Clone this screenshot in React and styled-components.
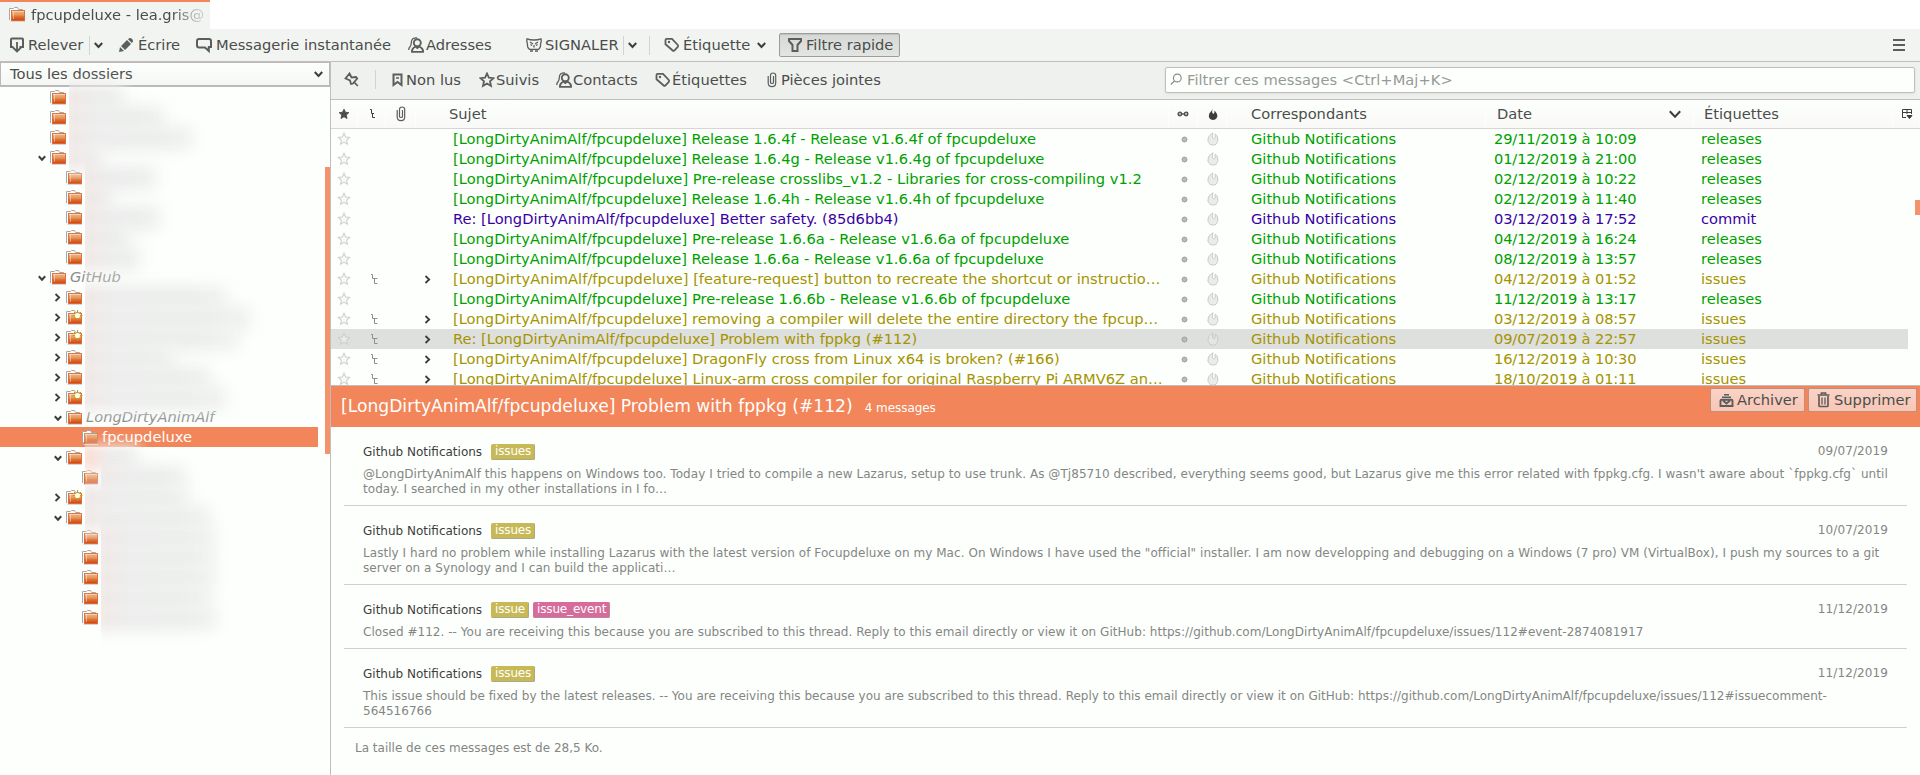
import React from "react";
import styled, { createGlobalStyle, css } from "styled-components";

const Global = createGlobalStyle`
  * { box-sizing: border-box; }
  body { margin: 0; background: #fdfffd; overflow: hidden; }
`;

const Window = styled.div`
  width: 1920px;
  height: 775px;
  display: flex;
  flex-direction: column;
  overflow: hidden;
  background: #fdfffd;
  color: #4b4d4b;
  font: 14.67px/20px "DejaVu Sans", sans-serif;
  white-space: nowrap;
  svg { flex: none; display: block; }
`;

const TabStrip = styled.div`
  height: 29px;
  flex: none;
  background: #fff;
  display: flex;
`;
const Tab = styled.div`
  width: 210px;
  height: 29px;
  border-top: 2px solid #f28559;
  background: #f2f4f2;
  display: flex;
  align-items: center;
  padding: 0 0 2px 9px;
  gap: 5px;
`;
const TabTitle = styled.span`
  width: 175px;
  mask-image: linear-gradient(to right, #000 140px, rgba(0,0,0,.25) 168px);
`;

const Toolbar = styled.div`
  height: 33px;
  flex: none;
  display: flex;
  align-items: center;
  background: #f2f4f2;
  border-bottom: 1px solid #c3bdbd;
  padding-left: 9px;
`;
const ToolItem = styled.div`
  display: flex;
  align-items: center;
  gap: ${(p) => p.$gap ?? 4}px;
  width: ${(p) => (p.$w ? p.$w + "px" : "auto")};
  padding-left: ${(p) => p.$pl ?? 0}px;
  flex: none;
`;
const Separator = styled.i`
  width: 1px;
  height: ${(p) => p.$h ?? 19}px;
  background: #d3d4d2;
  flex: none;
`;
const PressedButton = styled(ToolItem)`
  height: 24px;
  border: 1px solid #9c9e9c;
  border-radius: 2px;
  background: linear-gradient(#d6d8d6, #e3e5e3);
  box-shadow: inset 0 1px 1px #bfc1bf;
`;
const MenuButton = styled.div`
  margin-left: auto;
  margin-right: 15px;
`;

const Main = styled.div`
  flex: 1;
  min-height: 0;
  display: flex;
`;
const Sidebar = styled.aside`
  width: 331px;
  flex: none;
  border-right: 1px solid #c3bdbd;
  display: flex;
  flex-direction: column;
`;
const FolderMode = styled.div`
  height: 25px;
  flex: none;
  border: 1px solid #bdb9b9;
  border-bottom-width: 2px;
  background: linear-gradient(#fdfffd, #f5f7f5);
  display: flex;
  align-items: center;
  justify-content: space-between;
  padding: 0 6px 0 9px;
`;
const TreeArea = styled.div`
  flex: 1;
  display: flex;
  justify-content: space-between;
`;
const Tree = styled.div`
  width: 318px;
`;
const TreeThumb = styled.div`
  width: 5px;
  height: 287px;
  margin-top: 80px;
  background: #f4936b;
`;
const TreeRow = styled.div`
  height: 20px;
  display: flex;
  align-items: center;
  padding-left: ${(p) => 38 + p.$depth * 16}px;
  ${(p) => p.$selected && css`background: #f28559; color: #fff;`}
  > svg { margin-top: 2px; }
`;
const Twisty = styled.span`
  width: 12px;
  flex: none;
  display: flex;
  align-items: center;
  padding-top: 1px;
`;
const FolderLabel = styled.span`
  margin-left: 3px;
  font-style: ${(p) => (p.$italic ? "italic" : "normal")};
  color: ${(p) => (p.$italic ? "#8b8d8b" : "inherit")};
`;
const Redacted = styled.span`
  align-self: stretch;
  margin-left: 2px;
  width: ${(p) => p.$w + 30}px;
  overflow-x: clip;
  &::before {
    content: "";
    display: block;
    width: ${(p) => p.$w + 14}px;
    height: 26px;
    margin: -2px 0 0 -8px;
    background: linear-gradient(to right, ${(p) => p.$tint ?? "#efe8e6"} 12px, #ecedec 32px, #eceeec 75%, #f1f3f1);
    filter: blur(7px);
  }
`;

const Content = styled.section`
  flex: 1;
  min-width: 0;
  display: flex;
  flex-direction: column;
`;
const FilterBar = styled.div`
  height: 38px;
  flex: none;
  background: #eff1ef;
  border-bottom: 1px solid #c3bdbd;
  display: flex;
  align-items: center;
  padding: 0 5px 2px 13px;
`;
const SearchBox = styled.div`
  margin-left: auto;
  width: 750px;
  height: 26px;
  border: 1px solid #c3bdbd;
  border-radius: 2px;
  background: #fdfffd;
  box-shadow: 0 1px 3px #dddfdd;
  display: flex;
  align-items: center;
  padding-left: 4px;
  gap: 5px;
  color: #979997;
  letter-spacing: 0.03px;
`;

const COLUMNS = "27px 28px 30px 753px 29px 29px 259px 208px 199px 27px";
const HeaderRow = styled.div`
  height: 29px;
  flex: none;
  display: grid;
  grid-template-columns: ${COLUMNS};
  border-bottom: 1px solid #d9d5d4;
  background: linear-gradient(#fdfffd, #f9faf8);
`;
const HeaderCell = styled.div`
  display: flex;
  align-items: center;
  justify-content: ${(p) => (p.$text ? "space-between" : "center")};
  padding: 0 ${(p) => p.$pr ?? 0}px 0 ${(p) => p.$pl ?? 0}px;
  border-right: 1px solid #fdfefd;
`;
const ListArea = styled.div`
  height: 257px;
  flex: none;
  display: flex;
  overflow: hidden;
  border-bottom: 1px solid #c3bdbd;
`;
const List = styled.div`
  width: 1577px;
`;
const ListThumb = styled.div`
  width: 5px;
  height: 15px;
  margin: 71px 0 0 auto;
  background: #f4936b;
`;
const TONES = { releases: "#009f00", commit: "#3a00a6", issues: "#a59300" };
const MailRow = styled.div`
  height: 20px;
  display: grid;
  grid-template-columns: ${COLUMNS};
  letter-spacing: ${(p) => p.$track}px;
  color: ${(p) => TONES[p.$tag]};
  background: ${(p) => (p.$selected ? "#dee0de" : "transparent")};
`;
const IconCell = styled.span`
  display: flex;
  align-items: center;
  justify-content: center;
  padding-left: ${(p) => p.$pl ?? 0}px;
  padding-right: ${(p) => p.$pr ?? 0}px;
`;
const SubjectCell = styled.span`
  display: flex;
  align-items: center;
  padding-left: 8px;
  min-width: 0;
`;
const ThreadSlot = styled.span`
  width: 29px;
  flex: none;
`;
const TextCell = styled.span`
  padding-left: ${(p) => p.$pl}px;
  letter-spacing: ${(p) => p.$track ?? -0.022}px;
`;

const ThreadHeader = styled.div`
  height: 41px;
  flex: none;
  background: #f28559;
  color: #fff;
  display: flex;
  padding: 0 3px 0 10px;
`;
const ThreadTitle = styled.div`
  display: flex;
  align-items: baseline;
  gap: 12px;
  line-height: 41px;
  font-size: 17.15px;
  small { font-size: 12px; letter-spacing: -0.05px; }
`;
const Actions = styled.div`
  margin: 2px 0 0 auto;
  display: flex;
  gap: 3px;
`;
const ActionButton = styled.button`
  width: ${(p) => p.$w}px;
  height: 24px;
  border: 1px solid #c08f7d;
  border-radius: 2px;
  background: linear-gradient(#fad3c7, #f8c6b5);
  color: #4b4d4b;
  font: inherit;
  display: flex;
  align-items: center;
  gap: ${(p) => p.$gap ?? 3}px;
  padding: 0 0 0 8px;
`;
const Thread = styled.div`
  padding: 0 13px;
  font-size: 12px;
  line-height: 15px;
`;
const Message = styled.article`
  height: ${(p) => (p.$short ? 64 : 79)}px;
  border-bottom: 1px solid #cfd0cf;
  padding: 17px 19px 0;
  color: #848684;
`;
const MessageHead = styled.div`
  display: flex;
  height: 16px;
  color: #3c3e3c;
  align-items: center;
  gap: 4px;
  margin-bottom: 7px;
  time { margin: -2px 0 0 auto; color: #848684; letter-spacing: 0.1px; }
`;
const Preview = styled.div`
  letter-spacing: ${(p) => p.$track}px;
`;
const Sender = styled.span`
  margin-right: 5px;
`;
const Tag = styled.span`
  height: 16px;
  padding: 0 4px;
  border-radius: 2px;
  letter-spacing: -0.17px;
  color: #fff;
  background: ${(p) => (p.$event ? "#d66b9c" : "#c8b957")};
  box-shadow: inset -1px -1px 0 ${(p) => (p.$event ? "#b58aa0" : "#aca98a")};
`;
const Footer = styled.div`
  padding: 13px 11px;
  color: #848684;
`;

const Icon = ({ size = 16, w, h, children, ...rest }) => (
  <svg width={w ?? size} height={h ?? size} viewBox={`0 0 ${w ?? size} ${h ?? size}`} fill="none" stroke="#5c5e5c" strokeWidth="2" {...rest}>
    {children}
  </svg>
);

const FolderIcon = ({ open, fresh }) => (
  <svg width="17" height="16" viewBox="0 0 17 16" overflow="visible">
    <path d="M.5 13V1.500H4.500L5.500 .5H8.500L9.500 2.500H13.500V4" fill="#fff" stroke="#a5a8a5" />
    <path d="M1.500 14.500H16" stroke="#d5d7d5" />
    <rect x="2.500" y="3.500" width="13" height="10" fill="url(#folderFill)" stroke={open ? "#b7805c" : "#d4541f"} strokeOpacity=".75" />
    <path d="M3 4.500H15M4.500 4V12" stroke="#fff" strokeOpacity=".4" />
    {fresh && (
      <>
        <path d="M11.500 0V10.500M6.500 5.500H16.500M8 2L15 9M15 2L8 9" stroke="#c79b14" />
        <circle cx="11.500" cy="5.500" r="2.600" fill="#fffde0" />
      </>
    )}
    <defs>
      <linearGradient id="folderFill" x1="0" y1="0" x2="0" y2="1">
        <stop offset="0" stopColor="#f0b885" />
        <stop offset=".45" stopColor="#e5965a" />
        <stop offset=".6" stopColor="#de7434" />
        <stop offset="1" stopColor="#d2410f" />
      </linearGradient>
    </defs>
  </svg>
);
const Down = ({ w = 9, drop = 4 }) => (
  <Icon w={w} h={8} stroke="#3c3e3c"><path d={`M.8 ${4 - drop / 2}L${w / 2} ${4 + drop / 2}L${w - 0.8} ${4 - drop / 2}`} /></Icon>
);
const Right = () => (
  <Icon w={7} h={9} stroke="#3c3e3c" strokeWidth="1.800"><path d="M1.500 1L5.200 4.500L1.500 8" /></Icon>
);
const GetMail = () => (
  <Icon><path d="M4.500 10H2V2.500Q2 1.500 3 1.500H13Q14 1.500 14 2.500V10H10.500" /><path d="M8 5V13M4 10.500L8 14.500L12 10.500" strokeWidth="1.800" /></Icon>
);
const Pencil = () => (
  <Icon stroke="none" fill="#5c5e5c"><path d="M1 15L2 10L6 14ZM3 9L9 3L13 7L7 13ZM10 2.200L11.500 1Q15 1 15 4.500L13.800 6Z" /></Icon>
);
const Chat = () => (
  <Icon><path d="M3 2H13Q15 2 15 4V10H12.800V14L9 10.500H3Q1 10.500 1 8.500V4Q1 2 3 2Z" /></Icon>
);
const Person = () => (
  <Icon>
    <circle cx="9.300" cy="5.800" r="3.500" strokeWidth="1.900" />
    <path d="M4 14.900V13.500Q4.500 11 7.500 9.500L9.300 11L11.200 9.500Q14.500 11 15 13.500V14.900Z" strokeWidth="1.900" />
    <path d="M9 .8Q3.500 .5 3.300 5.500Q3.300 8.500 2 9.800Q.8 11 .7 13" strokeWidth="1.300" />
  </Icon>
);
const Owl = () => (
  <Icon strokeWidth="1.300">
    <path d="M1 1.800Q4 3 8 3Q12 3 15 1.800Q15.500 5 14.500 7Q15 11 12.500 12.300H3.500Q1 11 1.500 7Q.5 5 1 1.800Z" />
    <path d="M4 5L7 7M12 5L9 7M4.500 7.500L6 8.500M11.500 7.500L10 8.500M8 8V10.500M4 14H7M9 14H12" />
  </Icon>
);
const TagIcon = () => (
  <Icon><path d="M1.500 3Q1.500 1.800 2.700 1.800H8L13.800 8Q14.500 9 13.800 9.800L10.300 13.500Q9.500 14.200 8.700 13.500L1.500 7.300Z" strokeWidth="1.800" /><circle cx="5" cy="5" r="1.200" stroke="none" fill="#5c5e5c" /></Icon>
);
const Funnel = () => (
  <Icon><path d="M2 2H14V4L10.500 8V14H5.500V8L2 4Z" strokeWidth="2" /></Icon>
);
const Pin = () => (
  <Icon size={15}><path d="M5.500 1.500L7.500 5.500L12 5L13.200 6.500L9 11.500L7 12L6 8.500L1.500 6.500L5.500 1.500ZM9.500 9.500L13.800 14" strokeWidth="1.800" /></Icon>
);
const Bookmark = () => (
  <Icon w={11} h={14}><path d="M1.500 1.500H9.500V12L5.500 9L1.500 12Z" strokeWidth="2" /><path d="M4 5H7" strokeWidth="1.500" /></Icon>
);
const STAR = "M8 1.500L9.900 5.700L14.500 6.200L11 9.300L12 14L8 11.600L4 14L5 9.300L1.500 6.200L6.100 5.700Z";
const Star = () => <Icon><path d={STAR} strokeWidth="1.800" /></Icon>;
const Clip = ({ w = 10 }) => (
  <Icon w={w} h={16} strokeWidth="1.200"><path d="M6.500 4V10.500Q6.500 11.500 5 11.500Q3.500 11.500 3.500 10.500V3.500Q3.500 1 6 1Q8.700 1 8.700 3.500V11Q8.700 14.600 5 14.600Q1.200 14.600 1.200 11V4" /></Icon>
);
const SmallStar = ({ solid }) => (
  <svg width={solid ? 12 : 14} height={solid ? 12 : 14} viewBox="0 0 16 16">
    <path d={STAR} fill={solid ? "#4b4d4b" : "#f3f4f3"} fillOpacity={solid ? 1 : 0.5} stroke={solid ? "#4b4d4b" : "#cdcfcd"} strokeWidth="1.200" />
  </svg>
);
const ThreadIcon = () => (
  <Icon w={9} h={12} stroke="#8e908e" strokeWidth="1"><path d="M1 1.500H2.500V5.500H7.500M4.500 5.500V10.500H7.500" /></Icon>
);
const HeadThreadIcon = () => (
  <Icon w={9} h={12} stroke="#3c3e3c" strokeWidth="1"><path d="M2 1.500H3.500V5.500H6M4.500 5.500V9.500H7" /></Icon>
);
const ReadDot = () => (
  <svg width="7" height="7" viewBox="0 0 7 7"><circle cx="3.500" cy="3.500" r="2.500" fill="#b9bbb9" stroke="#929492" strokeWidth=".8" /></svg>
);
const Flame = () => (
  <svg width="12" height="14" viewBox="0 0 12 14">
    <path d="M6 .8Q3 2.500 1.500 5Q-.5 9.500 3 12.400Q6 14 9 12.400Q12 9.500 10.500 5Q9.500 2.500 8 2.200L8.300 6L7 7.200L5.500 6Q5.200 3 6 .8Z" fill="#e5e7e5" fillOpacity=".8" stroke="#c6c8c6" strokeWidth=".9" />
  </svg>
);
const DarkFlame = () => (
  <svg width="10" height="13" viewBox="0 0 10 13"><path d="M4.500 0Q3.500 4 5 6Q7 5 6.500 2.500Q10 6 9.200 9Q8 12 4.800 12Q1 11.500 .8 8Q.8 5 3 3.500Q4.300 2 4.500 0Z" fill="#3c3e3c" /></svg>
);
const Glasses = () => (
  <Icon w={12} h={8} strokeWidth="1.300" stroke="#4b4d4b"><circle cx="2.900" cy="4" r="1.800" fill="#b5b7b5" /><circle cx="9.100" cy="4" r="1.800" fill="#b5b7b5" /><path d="M4.700 4H7.300" /></Icon>
);
const Picker = () => (
  <Icon w={12} h={12} strokeWidth="1" stroke="#3c3e3c"><path d="M5 9.500H1.500V1.500H10.500V6M1.500 4.500H10.500M6 1.500V6" /><path d="M6 7.500H11L8.500 10.500Z" fill="#3c3e3c" /></Icon>
);
const Magnifier = () => (
  <Icon w={12} h={13} strokeWidth="1.100" stroke="#868886"><circle cx="7.300" cy="5" r="3.900" /><path d="M4.500 8L.8 11.500" /></Icon>
);
const Burger = () => (
  <Icon w={12} h={12} strokeWidth="2"><path d="M0 1H12M0 6H12M0 11H12" /></Icon>
);
const Archive = () => (
  <Icon size={15} strokeWidth="1.900"><path d="M5 1.700H10M3 4.200H12" strokeWidth="1.400" /><path d="M1.500 7.500Q1.500 6.700 2.500 6.700H12.500Q13.500 6.700 13.500 7.500V13H1.500ZM4 7.500L7.500 10.500L11 7.500" /></Icon>
);
const Trash = () => (
  <Icon w={13} h={16} strokeWidth="1.700"><path d="M.5 3H12.500M4.500 2.500V1H8.500V2.500M2 4V13.500Q2 14.500 3 14.500H10Q11 14.500 11 13.500V4" /><path d="M5 5.500V12.500M8 5.500V12.500" strokeWidth="1.300" /></Icon>
);

const FOLDERS = [
  { d: 0, w: 50 }, { d: 0, w: 90 }, { d: 0, w: 118 }, { d: 0, w: 28, t: "open" },
  { d: 1, w: 66 }, { d: 1, w: 20 }, { d: 1, w: 70 }, { d: 1, w: 40 }, { d: 1, w: 50 },
  { d: 0, name: "GitHub", t: "open" },
  { d: 1, w: 136, t: "shut" }, { d: 1, w: 160, t: "shut", fresh: true }, { d: 1, w: 148, t: "shut", fresh: true },
  { d: 1, w: 84, t: "shut" }, { d: 1, w: 120, t: "shut" }, { d: 1, w: 136, t: "shut", fresh: true },
  { d: 1, name: "LongDirtyAnimAlf", t: "open" },
  { d: 2, name: "fpcupdeluxe", selected: true },
  { d: 1, w: 48, t: "open", tint: "#fbddd3" }, { d: 2, w: 80 },
  { d: 1, w: 98, t: "shut", fresh: true }, { d: 1, w: 120, t: "open" },
  { d: 2, w: 108 }, { d: 2, w: 108 }, { d: 2, w: 108 }, { d: 2, w: 104 }, { d: 2, w: 110 },
];

const P = "[LongDirtyAnimAlf/fpcupdeluxe] ";
const MAILS = [
  { subject: P + "Release 1.6.4f - Release v1.6.4f of fpcupdeluxe", date: "29/11/2019 à 10:09", tag: "releases" },
  { subject: P + "Release 1.6.4g - Release v1.6.4g of fpcupdeluxe", date: "01/12/2019 à 21:00", tag: "releases" },
  { subject: P + "Pre-release crosslibs_v1.2 - Libraries for cross-compiling v1.2", date: "02/12/2019 à 10:22", tag: "releases", track: 0.018 },
  { subject: P + "Release 1.6.4h - Release v1.6.4h of fpcupdeluxe", date: "02/12/2019 à 11:40", tag: "releases" },
  { subject: "Re: " + P + "Better safety. (85d6bb4)", date: "03/12/2019 à 17:52", tag: "commit" },
  { subject: P + "Pre-release 1.6.6a - Release v1.6.6a of fpcupdeluxe", date: "04/12/2019 à 16:24", tag: "releases", track: -0.01 },
  { subject: P + "Release 1.6.6a - Release v1.6.6a of fpcupdeluxe", date: "08/12/2019 à 13:57", tag: "releases" },
  { subject: P + "[feature-request] button to recreate the shortcut or instructio…", date: "04/12/2019 à 01:52", tag: "issues", thread: true, track: 0.028 },
  { subject: P + "Pre-release 1.6.6b - Release v1.6.6b of fpcupdeluxe", date: "11/12/2019 à 13:17", tag: "releases", track: -0.008 },
  { subject: P + "removing a compiler will delete the entire directory the fpcup…", date: "03/12/2019 à 08:57", tag: "issues", thread: true, track: -0.008 },
  { subject: "Re: " + P + "Problem with fppkg (#112)", date: "09/07/2019 à 22:57", tag: "issues", thread: true, selected: true },
  { subject: P + "DragonFly cross from Linux x64 is broken? (#166)", date: "16/12/2019 à 10:30", tag: "issues", thread: true, track: -0.007 },
  { subject: P + "Linux-arm cross compiler for original Raspberry Pi ARMV6Z an…", date: "18/10/2019 à 01:11", tag: "issues", thread: true, track: 0.004 },
];

const MESSAGES = [
  { date: "09/07/2019", tags: ["issues"], track: 0.056, lines: ["@LongDirtyAnimAlf this happens on Windows too. Today I tried to compile a new Lazarus, setup to use trunk. As @Tj85710 described, everything seems good, but Lazarus give me this error related with fppkg.cfg. I wasn't aware about `fppkg.cfg` until", "today. I searched in my other installations in I fo…"] },
  { date: "10/07/2019", tags: ["issues"], track: 0.053, lines: ["Lastly I hard no problem while installing Lazarus with the latest version of Focupdeluxe on my Mac. On Windows I have used the \"official\" installer. I am now developping and debugging on a Windows (7 pro) VM (VirtualBox), I push my sources to a git", "server on a Synology and I can build the applicati…"] },
  { date: "11/12/2019", tags: ["issue", "issue_event"], track: 0.038, lines: ["Closed #112. -- You are receiving this because you are subscribed to this thread. Reply to this email directly or view it on GitHub: https://github.com/LongDirtyAnimAlf/fpcupdeluxe/issues/112#event-2874081917"] },
  { date: "11/12/2019", tags: ["issues"], track: 0.013, lines: ["This issue should be fixed by the latest releases. -- You are receiving this because you are subscribed to this thread. Reply to this email directly or view it on GitHub: https://github.com/LongDirtyAnimAlf/fpcupdeluxe/issues/112#issuecomment-", "564516766"] },
];

export default function App() {
  return (
    <Window>
      <Global />
      <TabStrip>
        <Tab><FolderIcon /><TabTitle>fpcupdeluxe - lea.gris@</TabTitle></Tab>
      </TabStrip>
      <Toolbar>
        <ToolItem $w={80} $gap={3}><GetMail />Relever</ToolItem>
        <Separator />
        <ToolItem $w={28} $pl={4}><Down /></ToolItem>
        <ToolItem $w={78}><Pencil />Écrire</ToolItem>
        <ToolItem $w={212} $gap={4}><Chat />Messagerie instantanée</ToolItem>
        <ToolItem $w={118} $gap={2}><Person />Adresses</ToolItem>
        <ToolItem $w={97} $gap={3}><Owl />SIGNALER</ToolItem>
        <Separator />
        <ToolItem $w={25} $pl={4}><Down /></ToolItem>
        <Separator />
        <ToolItem $w={129} $gap={3} $pl={14}><TagIcon />Étiquette<ToolItem $pl={4}><Down /></ToolItem></ToolItem>
        <PressedButton $w={121} $gap={3} $pl={7}><Funnel />Filtre rapide</PressedButton>
        <MenuButton><Burger /></MenuButton>
      </Toolbar>
      <Main>
        <Sidebar>
          <FolderMode>Tous les dossiers<Down /></FolderMode>
          <TreeArea>
            <Tree>
              {FOLDERS.map((f, i) => (
                <TreeRow key={i} $depth={f.d} $selected={f.selected}>
                  <Twisty>{f.t === "open" ? <Down w={8} drop={3.5} /> : f.t === "shut" ? <Right /> : null}</Twisty>
                  <FolderIcon fresh={f.fresh} open={f.selected} />
                  {f.name ? <FolderLabel $italic={!f.selected}>{f.name}</FolderLabel> : <Redacted $w={f.w} $tint={f.tint} />}
                </TreeRow>
              ))}
            </Tree>
            <TreeThumb />
          </TreeArea>
        </Sidebar>
        <Content>
          <FilterBar>
            <ToolItem $w={31}><Pin /></ToolItem>
            <Separator />
            <ToolItem $w={103} $pl={16} $gap={3}><Bookmark />Non lus</ToolItem>
            <ToolItem $w={77} $gap={1}><Star />Suivis</ToolItem>
            <ToolItem $w={99} $gap={1}><Person />Contacts</ToolItem>
            <ToolItem $w={112} $gap={1}><TagIcon />Étiquettes</ToolItem>
            <ToolItem><Clip />Pièces jointes</ToolItem>
            <SearchBox><Magnifier />Filtrer ces messages &lt;Ctrl+Maj+K&gt;</SearchBox>
          </FilterBar>
          <HeaderRow>
            <HeaderCell><SmallStar solid /></HeaderCell>
            <HeaderCell $pl={1}><HeadThreadIcon /></HeaderCell>
            <HeaderCell $pl={1}><Clip /></HeaderCell>
            <HeaderCell $text $pl={33}>Sujet</HeaderCell>
            <HeaderCell><Glasses /></HeaderCell>
            <HeaderCell $pl={1}><DarkFlame /></HeaderCell>
            <HeaderCell $text $pl={24}>Correspondants</HeaderCell>
            <HeaderCell $text $pl={11} $pr={12}>Date<Down w={12} drop={5.5} /></HeaderCell>
            <HeaderCell $text $pl={10}>Étiquettes</HeaderCell>
            <HeaderCell $pl={1}><Picker /></HeaderCell>
          </HeaderRow>
          <ListArea>
            <List>
              {MAILS.map((m, i) => (
                <MailRow key={i} $tag={m.tag} $selected={m.selected} $track={m.track ?? -0.022}>
                  <IconCell $pr={1}><SmallStar /></IconCell>
                  <IconCell $pl={4}>{m.thread && <ThreadIcon />}</IconCell>
                  <span />
                  <SubjectCell><ThreadSlot>{m.thread && <Right />}</ThreadSlot>{m.subject}</SubjectCell>
                  <IconCell $pl={1}><ReadDot /></IconCell>
                  <IconCell><Flame /></IconCell>
                  <TextCell $pl={24}>Github Notifications</TextCell>
                  <TextCell $pl={8} $track={-0.14}>{m.date}</TextCell>
                  <TextCell $pl={7}>{m.tag}</TextCell>
                </MailRow>
              ))}
            </List>
            <ListThumb />
          </ListArea>
          <ThreadHeader>
            <ThreadTitle>[LongDirtyAnimAlf/fpcupdeluxe] Problem with fppkg (#112)<small>4 messages</small></ThreadTitle>
            <Actions>
              <ActionButton $w={95}><Archive />Archiver</ActionButton>
              <ActionButton $w={109} $gap={4}><Trash />Supprimer</ActionButton>
            </Actions>
          </ThreadHeader>
          <Thread>
            {MESSAGES.map((m, i) => (
              <Message key={i} $short={m.lines.length === 1}>
                <MessageHead>
                  <Sender>Github Notifications</Sender>
                  {m.tags.map((t) => <Tag key={t} $event={t === "issue_event"}>{t}</Tag>)}
                  <time>{m.date}</time>
                </MessageHead>
                {m.lines.map((l) => <Preview key={l} $track={m.track}>{l}</Preview>)}
              </Message>
            ))}
            <Footer>La taille de ces messages est de 28,5 Ko.</Footer>
          </Thread>
        </Content>
      </Main>
    </Window>
  );
}
